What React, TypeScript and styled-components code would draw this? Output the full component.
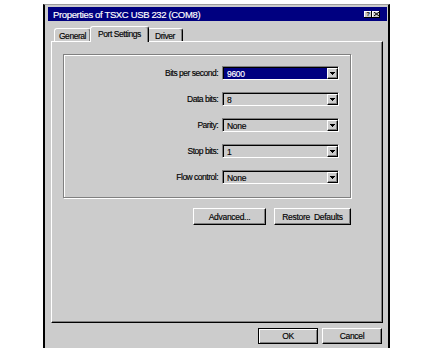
import React from "react";
import styled, { createGlobalStyle, css } from "styled-components";

const GRAY = "#cccccc";
const DARK = "#808080";
const NAVY = "#000080";

const Global = createGlobalStyle`
  html, body { margin: 0; padding: 0; background: #fff; overflow: hidden; }
  body { font-family: "Liberation Sans", Arial, sans-serif; }
  * { box-sizing: border-box; }
`;

const Page = styled.div`
  width: 434px;
  height: 348px;
  padding: 4px 0 0 43px;
  overflow: hidden;
`;

const Window = styled.div`
  width: 347px;
  height: 360px;
  background: ${GRAY};
  border-top: 1px solid #9c9c9c;
  border-left: 2px solid #000;
  border-right: 2px solid #000;
  padding: 2px 1px 0 3px;
  display: flex;
  flex-direction: column;
`;

const TitleBar = styled.div`
  height: 14px;
  background: ${NAVY};
  color: #fff;
  display: flex;
  align-items: center;
  padding: 0 7px 0 5px;
  font-size: 9.5px;
  letter-spacing: -0.35px;
  -webkit-text-stroke: 0.15px #fff;
  white-space: nowrap;
`;

const TitleText = styled.span`
  flex: 1;
`;

const TitleButtons = styled.div`
  display: flex;
`;

const TitleButton = styled.div`
  width: 8px;
  height: 7px;
  background: ${GRAY};
  box-shadow: inset -1px -1px 0 #000, inset 1px 1px 0 #fff;
  display: flex;
  align-items: center;
  justify-content: center;
  color: #000;
  font-size: 6px;
  font-weight: bold;
  line-height: 1;
  -webkit-text-stroke: 0;
`;

const Body = styled.div`
  padding: 5px 4px 0 3px;
  display: flex;
  flex-direction: column;
`;

const TabRow = styled.div`
  display: flex;
  align-items: flex-end;
  height: 16px;
  margin-bottom: -1px;
  padding-left: 3px;
  position: relative;
  z-index: 1;
`;

const Tab = styled.div<{ $active?: boolean; $w: number }>`
  width: ${(p) => p.$w}px;
  height: 13px;
  margin-bottom: 1px;
  padding-top: 1px;
  background: ${GRAY};
  border-top: 1px solid #fff;
  border-left: 1px solid #fff;
  border-right: 1px solid #000;
  border-radius: 3px 3px 0 0;
  box-shadow: inset -1px 0 0 ${DARK};
  display: flex;
  align-items: center;
  justify-content: center;
  font-size: 8.5px;
  letter-spacing: -0.45px;
  -webkit-text-stroke: 0.15px #000;
  color: #000;
  ${(p) =>
    p.$active &&
    css`
      height: 16px;
      margin-bottom: 0;
      margin-left: -1px;
      margin-right: -2px;
      padding-top: 0;
      padding-bottom: 2px;
      position: relative;
      z-index: 2;
    `}
`;

const Panel = styled.div`
  height: 282px;
  border-top: 1px solid #fff;
  border-left: 1px solid #fff;
  border-right: 1px solid #000;
  border-bottom: 1px solid #000;
  box-shadow: inset -1px -1px 0 ${DARK};
  padding: 12px 0 0 11px;
`;

const Group = styled.div`
  width: 288px;
  border: 1px solid ${DARK};
  box-shadow: inset 1px 1px 0 #fff, 1px 1px 0 #fff;
  padding: 11px 11px 13px 0;
  display: grid;
  grid-template-columns: 1fr 117px;
  column-gap: 4px;
  row-gap: 12px;
  align-items: center;
`;

const Label = styled.div`
  text-align: right;
  font-size: 8.5px;
  letter-spacing: -0.5px;
  -webkit-text-stroke: 0.15px #000;
  color: #000;
  white-space: pre;
`;

const Combo = styled.div`
  height: 14px;
  border: 1px solid;
  border-color: ${DARK} #fff #fff ${DARK};
  display: flex;
`;

const ComboInner = styled.div`
  flex: 1;
  display: flex;
  border-top: 1px solid #000;
  border-left: 1px solid #000;
`;

const Field = styled.div<{ $selected?: boolean }>`
  flex: 1;
  display: flex;
  align-items: center;
  padding-left: 3px;
  font-size: 8.5px;
  letter-spacing: -0.3px;
  background: ${(p) => (p.$selected ? NAVY : "transparent")};
  color: ${(p) => (p.$selected ? "#fff" : "#000")};
  -webkit-text-stroke: 0.15px ${(p) => (p.$selected ? "#fff" : "#000")};
`;

const DropButton = styled.div`
  width: 11px;
  background: ${GRAY};
  border-top: 1px solid #fff;
  border-left: 1px solid #fff;
  border-right: 1px solid #000;
  border-bottom: 1px solid #000;
  box-shadow: inset -1px -1px 0 ${DARK};
  display: flex;
  align-items: center;
  justify-content: center;
  padding-right: 1px;
`;

const ButtonRow = styled.div`
  width: 288px;
  display: flex;
  justify-content: flex-end;
  gap: 8px;
  margin-top: 10px;
`;

const FooterRow = styled.div`
  display: flex;
  justify-content: flex-end;
  gap: 4px;
  margin-top: 5px;
  padding-right: 1px;
`;

const Button = styled.button<{ $w: number; $h: number; $default?: boolean }>`
  width: ${(p) => p.$w}px;
  height: ${(p) => p.$h}px;
  padding: 0;
  margin: 0;
  font-family: "Liberation Sans", Arial, sans-serif;
  font-size: 8.5px;
  letter-spacing: -0.3px;
  -webkit-text-stroke: 0.15px #000;
  color: #000;
  background: ${GRAY};
  border-top: 1px solid #fff;
  border-left: 1px solid #fff;
  border-right: 1px solid #000;
  border-bottom: 1px solid #000;
  box-shadow: inset -1px -1px 0 ${DARK};
  white-space: pre;
  ${(p) =>
    p.$default &&
    css`
      border: 1px solid #000;
      box-shadow: inset 1px 1px 0 #fff, inset -1px -1px 0 ${DARK};
    `}
`;

const Arrow = () => (
  <svg width="5" height="3" viewBox="0 0 5 3">
    <path d="M0 0h5v1h-1v1h-1v1h-1v-1h-1v-1h-1z" fill="#000" />
  </svg>
);

const CloseGlyph = () => (
  <svg width="5" height="4" viewBox="0 0 5 4">
    <path d="M0 0L5 4M5 0L0 4" stroke="#000" strokeWidth="1" />
  </svg>
);

const rows = [
  { label: "Bits per second:", value: "9600", selected: true },
  { label: "Data bits:", value: "8" },
  { label: "Parity:", value: "None" },
  { label: "Stop bits:", value: "1" },
  { label: "Flow control:", value: "None" },
];

export default function App() {
  return (
    <>
      <Global />
      <Page>
        <Window>
          <TitleBar>
            <TitleText>Properties of TSXC USB 232 (COM8)</TitleText>
            <TitleButtons>
              <TitleButton>?</TitleButton>
              <TitleButton>
                <CloseGlyph />
              </TitleButton>
            </TitleButtons>
          </TitleBar>
          <Body>
            <TabRow>
              <Tab $w={37}>General</Tab>
              <Tab $w={59} $active>
                Port Settings
              </Tab>
              <Tab $w={36}>Driver</Tab>
            </TabRow>
            <Panel>
              <Group>
                {rows.map((r) => (
                  <React.Fragment key={r.label}>
                    <Label>{r.label}</Label>
                    <Combo>
                      <ComboInner>
                        <Field $selected={r.selected}>{r.value}</Field>
                        <DropButton>
                          <Arrow />
                        </DropButton>
                      </ComboInner>
                    </Combo>
                  </React.Fragment>
                ))}
              </Group>
              <ButtonRow>
                <Button $w={73} $h={17}>
                  Advanced...
                </Button>
                <Button $w={77} $h={17}>
                  {"Restore  Defaults"}
                </Button>
              </ButtonRow>
            </Panel>
            <FooterRow>
              <Button $w={60} $h={16} $default>
                OK
              </Button>
              <Button $w={60} $h={16}>
                Cancel
              </Button>
            </FooterRow>
          </Body>
        </Window>
      </Page>
    </>
  );
}
